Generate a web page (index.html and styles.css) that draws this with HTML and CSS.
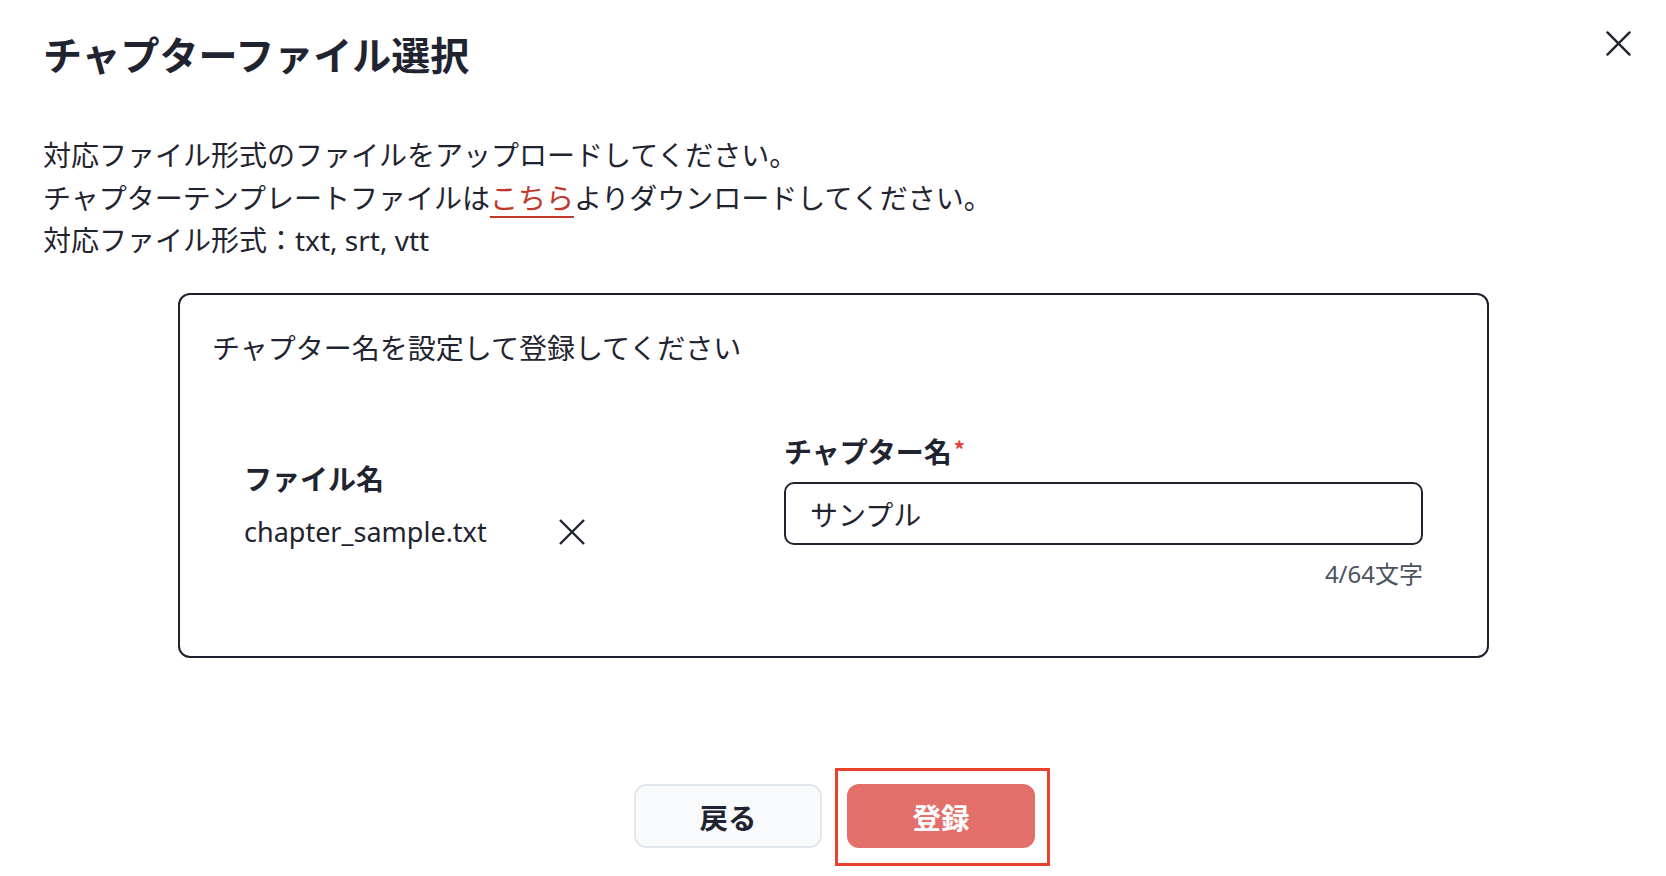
FILE: index.html
```html
<!DOCTYPE html>
<html lang="ja">
<head>
<meta charset="utf-8">
<title>チャプターファイル選択</title>
<link rel="stylesheet" href="styles.css">
</head>
<body>
<div class="modal">
  <header class="modal-header">
    <h1 class="modal-title">チャプターファイル選択</h1>
    <button class="close-btn" aria-label="閉じる">
      <svg viewBox="0 0 26 26" width="25" height="25"><path d="M1.5 1.5L24.5 24.5M24.5 1.5L1.5 24.5" stroke="#1f2430" stroke-width="2.5" stroke-linecap="round" fill="none"/></svg>
    </button>
  </header>
  <div class="description">
    <p>対応ファイル形式のファイルをアップロードしてください。</p>
    <p>チャプターテンプレートファイルは<a class="link" href="#">こちら</a>よりダウンロードしてください。</p>
    <p>対応ファイル形式：txt, srt, vtt</p>
  </div>
  <section class="card">
    <p class="card-heading">チャプター名を設定して登録してください</p>
    <div class="card-row">
      <div class="file-col">
        <div class="field-label">ファイル名</div>
        <div class="file-line">
          <span class="file-name">chapter_sample.txt</span>
          <button class="remove-btn" aria-label="削除">
            <svg viewBox="0 0 26 26" width="26" height="26"><path d="M1 1L25 25M25 1L1 25" stroke="#1f2430" stroke-width="2.4" fill="none"/></svg>
          </button>
        </div>
      </div>
      <div class="name-col">
        <label class="field-label">チャプター名<span class="req">*</span></label>
        <div class="input-box">サンプル</div>
        <div class="counter">4/64文字</div>
      </div>
    </div>
  </section>
  <div class="actions">
    <button class="btn btn-back">戻る</button>
    <button class="btn btn-submit">登録</button>
  </div>
</div>
</body>
</html>
```
FILE: styles.css
```css
* { box-sizing: border-box; }
html, body { margin: 0; padding: 0; background: #ffffff; }
body {
  font-family: "Noto Sans", "Noto Sans CJK JP", sans-serif;
  color: #1f2430;
  width: 1666px;
  height: 876px;
  overflow: hidden;
}
.modal {
  padding: 30px 35px 0 43px;
}
.modal-header {
  display: flex;
  justify-content: space-between;
  align-items: flex-start;
}
.modal-title {
  margin: 0;
  font-size: 39px;
  line-height: 46px;
  font-weight: 700;
  font-family: "Noto Sans CJK JP", sans-serif;
}
.close-btn {
  margin-top: 1px;
  padding: 0;
  border: 0;
  background: none;
  width: 25px;
  height: 25px;
  display: flex;
}
.description {
  margin-top: 58px;
  font-size: 28px;
  line-height: 42.5px;
}
.description p { margin: 0; }
.link {
  color: #c0392b;
  text-decoration: underline;
  text-underline-offset: 7px;
  text-decoration-thickness: 2px;
}
.card {
  margin: 31px 0 0 135px;
  width: 1311px;
  border: 2px solid #1c212b;
  border-radius: 12px;
  padding: 32px 32px 64px 32px;
}
.card-heading {
  margin: 0;
  font-size: 28px;
  line-height: 42.5px;
}
.card-row {
  display: grid;
  grid-template-columns: 540px 1fr;
  padding: 0 32px;
  margin-top: 58px;
}
.file-col { padding-top: 30px; }
.field-label {
  display: block;
  font-size: 28px;
  line-height: 42px;
  font-weight: 700;
  font-family: "Noto Sans CJK JP", sans-serif;
}
.req {
  color: #e0443a;
  font-size: 22px;
  font-weight: 700;
  vertical-align: 5px;
  margin-left: 2px;
}
.file-line {
  display: flex;
  align-items: center;
  margin-top: 12px;
  font-size: 27px;
  line-height: 42.5px;
}
.remove-btn {
  margin-left: 72px;
  padding: 0;
  border: 0;
  background: none;
  display: flex;
}
.input-box {
  margin-top: 10px;
  height: 63px;
  border: 2px solid #1f2430;
  border-radius: 10px;
  padding: 0 24px;
  display: flex;
  align-items: center;
  font-size: 28px;
}
.counter {
  margin-top: 11px;
  text-align: right;
  font-size: 24px;
  line-height: 36px;
  color: #4b5260;
}
.actions {
  display: flex;
  justify-content: center;
  gap: 25px;
  margin: 126px 5px 0 0;
}
.btn {
  width: 188px;
  height: 64px;
  border-radius: 12px;
  font-size: 28.5px;
  font-weight: 700;
  font-family: "Noto Sans CJK JP", sans-serif;
  cursor: pointer;
}
.btn-back {
  background: #f8fafc;
  border: 2px solid #e2e8f0;
  color: #1f2430;
}
.btn-submit {
  position: relative;
  background: #e36f6b;
  border: 0;
  color: #ffffff;
}
.btn-submit::after {
  content: "";
  position: absolute;
  top: -16px;
  bottom: -18px;
  left: -12px;
  right: -15px;
  border: 3px solid #e8412c;
  pointer-events: none;
}
```
